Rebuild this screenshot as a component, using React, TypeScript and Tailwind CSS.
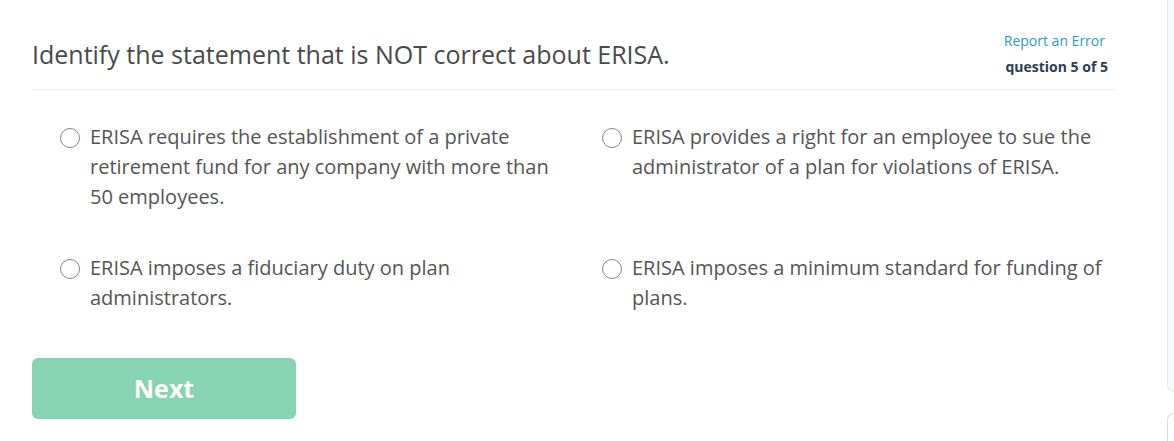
import React, { useState } from 'react';

// --- Data ---
const options = [
  'ERISA requires the establishment of a private retirement fund for any company with more than 50 employees.',
  'ERISA provides a right for an employee to sue the administrator of a plan for violations of ERISA.',
  'ERISA imposes a fiduciary duty on plan administrators.',
  'ERISA imposes a minimum standard for funding of plans.',
];

// --- Radio option ---
function Option({ text, checked, onSelect }: { text: string; checked: boolean; onSelect: () => void }) {
  return (
    <label className="flex items-start gap-[10px] cursor-pointer" onClick={onSelect}>
      <span className="mt-[6px] w-[20px] h-[20px] flex-shrink-0 rounded-full border-[1.5px] border-[#858585] bg-white flex items-center justify-center">
        {checked && <span className="w-[9px] h-[9px] rounded-full bg-[#555]" />}
      </span>
      <span className="w-[478px] text-[20px] leading-[30px] text-[#555555]">{text}</span>
    </label>
  );
}

export default function App() {
  const [selected, setSelected] = useState<number | null>(null);

  return (
    <div className="w-[1174px] h-[441px] bg-white flex overflow-hidden" style={{ fontFamily: '"Open Sans", "Noto Sans", sans-serif' }}>
      {/* Main column */}
      <div className="flex-1 pl-[32px]">
        <div className="w-[1084px]">
          {/* Header */}
          <div className="mt-[20px] h-[70px] flex items-center justify-between border-b border-[#ececec]">
            <h1 className="text-[25px] text-[#4a4a4a]">Identify the statement that is NOT correct about ERISA.</h1>
            <div className="flex flex-col items-end pr-[8px] pb-[2px]">
              <a className="text-[14px] leading-[18px] text-[#2b9ec0] mr-[3px] cursor-pointer">Report an Error</a>
              <span className="mt-[8px] text-[14px] leading-[18px] font-bold text-[#2c3e50]">question 5 of 5</span>
            </div>
          </div>

          {/* Options */}
          <div className="ml-[28px] mt-[32px] grid grid-cols-[542px_542px] gap-y-[41px]">
            {options.map((o, i) => (
              <Option key={i} text={o} checked={selected === i} onSelect={() => setSelected(i)} />
            ))}
          </div>

          {/* Next */}
          <button className="mt-[45px] w-[264px] h-[61px] rounded-md bg-[#88d3b3] text-white text-[25px] font-bold">
            Next
          </button>
        </div>
      </div>

      {/* Right edge panels */}
      <div className="w-[7px] flex flex-col">
        <div className="h-[392px] rounded-bl-lg border-l border-b border-[#e6e6e6] bg-[#f8f9fa]" />
        <div className="mt-[21px] flex-1 rounded-tl-lg border-l border-t border-[#dcdcdc] bg-white" />
      </div>
    </div>
  );
}
